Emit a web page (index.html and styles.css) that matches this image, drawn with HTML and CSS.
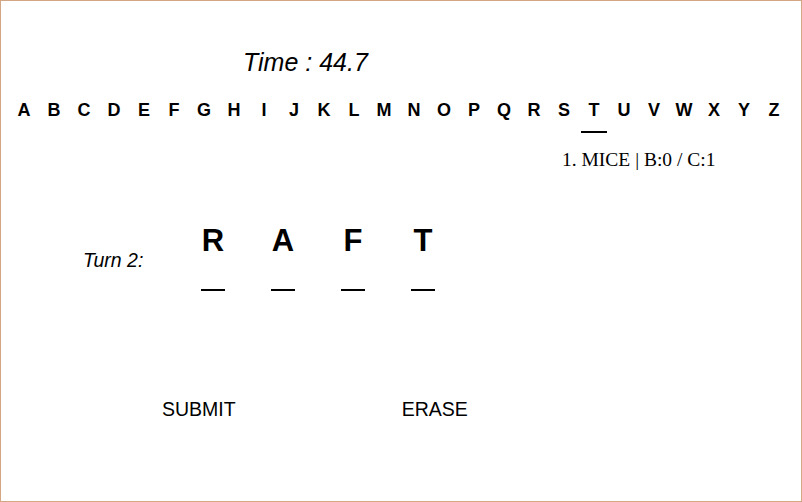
FILE: index.html
```html
<!DOCTYPE html>
<html>
<head>
<meta charset="utf-8">
<link rel="stylesheet" href="styles.css">
</head>
<body>
<div class="frame">
  <div class="timer">Time : 44.7</div>
  <div class="alphabet">
    <div class="key"><span class="glyph">A</span></div>
    <div class="key"><span class="glyph">B</span></div>
    <div class="key"><span class="glyph">C</span></div>
    <div class="key"><span class="glyph">D</span></div>
    <div class="key"><span class="glyph">E</span></div>
    <div class="key"><span class="glyph">F</span></div>
    <div class="key"><span class="glyph">G</span></div>
    <div class="key"><span class="glyph">H</span></div>
    <div class="key"><span class="glyph">I</span></div>
    <div class="key"><span class="glyph">J</span></div>
    <div class="key"><span class="glyph">K</span></div>
    <div class="key"><span class="glyph">L</span></div>
    <div class="key"><span class="glyph">M</span></div>
    <div class="key"><span class="glyph">N</span></div>
    <div class="key"><span class="glyph">O</span></div>
    <div class="key"><span class="glyph">P</span></div>
    <div class="key"><span class="glyph">Q</span></div>
    <div class="key"><span class="glyph">R</span></div>
    <div class="key"><span class="glyph">S</span></div>
    <div class="key key-active"><span class="glyph">T</span><span class="marker"></span></div>
    <div class="key"><span class="glyph">U</span></div>
    <div class="key"><span class="glyph">V</span></div>
    <div class="key"><span class="glyph">W</span></div>
    <div class="key"><span class="glyph">X</span></div>
    <div class="key"><span class="glyph">Y</span></div>
    <div class="key"><span class="glyph">Z</span></div>
  </div>
  <div class="history">1. MICE | B:0 / C:1</div>
  <div class="board">
    <div class="turn-label">Turn 2:</div>
    <div class="slot"><span class="slot-letter">R</span><span class="slot-line"></span></div>
    <div class="slot"><span class="slot-letter">A</span><span class="slot-line"></span></div>
    <div class="slot"><span class="slot-letter">F</span><span class="slot-line"></span></div>
    <div class="slot"><span class="slot-letter">T</span><span class="slot-line"></span></div>
  </div>
  <div class="actions">
    <button class="action submit">SUBMIT</button>
    <button class="action erase">ERASE</button>
  </div>
</div>
</body>
</html>
```
FILE: styles.css
```css
html, body {
  margin: 0;
  padding: 0;
  background: #ffffff;
}

.frame {
  box-sizing: border-box;
  width: 802px;
  height: 502px;
  border: 1px solid #d3a784;
  font-family: "Liberation Sans", Arial, sans-serif;
  color: #000000;
  overflow: hidden;
}

.timer {
  margin-top: 49px;
  padding-left: 242px;
  font-size: 25px;
  line-height: 25px;
  font-style: italic;
}

.alphabet {
  margin-top: 26px;
  padding-left: 8px;
  display: flex;
  align-items: flex-start;
}

.key {
  width: 30px;
  display: flex;
  flex-direction: column;
  align-items: center;
}

.glyph {
  font-size: 18px;
  line-height: 18px;
  font-weight: bold;
}

.marker {
  margin-top: 12px;
  width: 26px;
  height: 2px;
  background: #000000;
}

.history {
  margin-top: 17px;
  padding-left: 561px;
  font-family: "Liberation Serif", "Times New Roman", serif;
  font-size: 19.5px;
  line-height: 20px;
  height: 20px;
}

.board {
  margin-top: 56px;
  display: flex;
  align-items: flex-start;
}

.turn-label {
  width: 95px;
  padding-left: 82px;
  margin-top: 25px;
  font-size: 19.5px;
  line-height: 19px;
  font-style: italic;
}

.slot {
  width: 70px;
  display: flex;
  flex-direction: column;
  align-items: center;
}

.slot-letter {
  font-size: 31px;
  line-height: 30px;
  font-weight: bold;
}

.slot-line {
  margin-top: 33px;
  width: 24px;
  height: 2px;
  background: #000000;
}

.actions {
  margin-top: 109px;
  padding-left: 161px;
  display: flex;
  gap: 166px;
}

.action {
  background: none;
  border: none;
  padding: 0;
  margin: 0;
  font-family: "Liberation Sans", Arial, sans-serif;
  font-size: 19.5px;
  line-height: 19px;
  color: #000000;
}
```
